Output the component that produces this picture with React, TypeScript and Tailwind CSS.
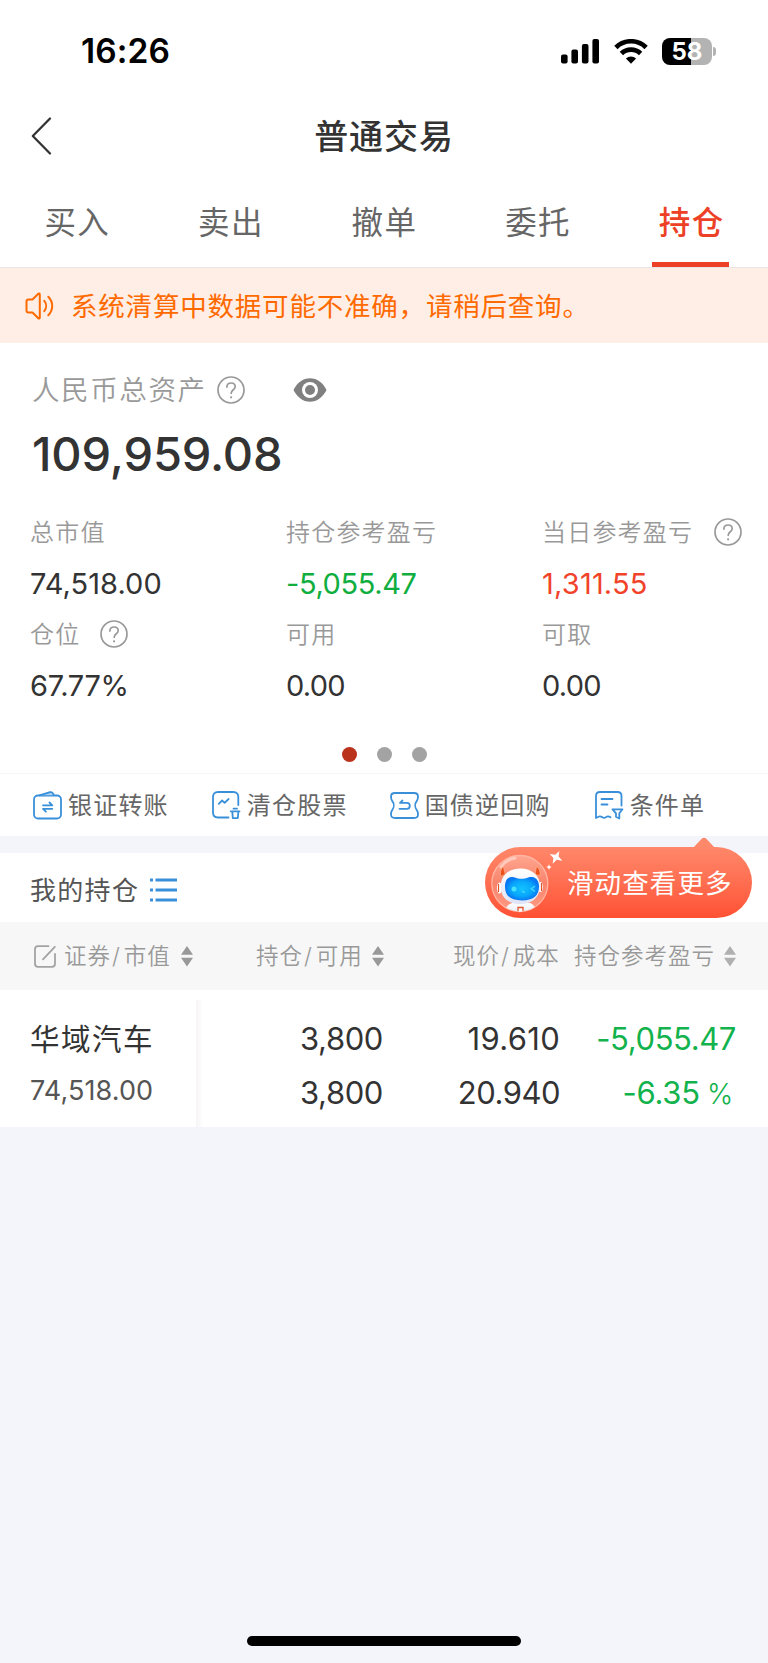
import React from 'react';

interface IconProps {
  className?: string;
}

interface Stat {
  label: string;
  value: string;
  valueClass: string;
  help?: string;
}

const tabs = ['买入', '卖出', '撤单', '委托', '持仓'];

const stats: Stat[] = [
  { label: '总市值', value: '74,518.00', valueClass: 'tracking-[0.05px] text-[#333]' },
  { label: '持仓参考盈亏', value: '-5,055.47', valueClass: 'tracking-[-0.4px] text-[#0fae3f]' },
  { label: '当日参考盈亏', value: '1,311.55', valueClass: 'tracking-[0.2px] text-[#f0432a]', help: 'ml-[21px]' },
  { label: '仓位', value: '67.77%', valueClass: 'tracking-[-0.3px] text-[#333]', help: 'ml-[20px]' },
  { label: '可用', value: '0.00', valueClass: 'tracking-[-0.7px] text-[#333]' },
  { label: '可取', value: '0.00', valueClass: 'tracking-[-0.7px] text-[#333]' },
];

const BackIcon: React.FC = () => (
  <svg width="22" height="40" viewBox="0 0 22 40" fill="none" stroke="#333" strokeWidth="2.3" strokeLinecap="round" strokeLinejoin="round">
    <path d="M20 2.5 2.8 20 20 37.5" />
  </svg>
);

const SignalIcon: React.FC = () => (
  <svg width="39" height="25" viewBox="0 0 39 25" fill="#000">
    <rect x="0" y="15.5" width="6.6" height="9" rx="2" />
    <rect x="10.4" y="10.5" width="6.6" height="14" rx="2" />
    <rect x="20.9" y="5" width="6.6" height="19.5" rx="2" />
    <rect x="31.4" y="0" width="6.6" height="24.5" rx="2" />
  </svg>
);

const WifiIcon: React.FC = () => (
  <svg width="34" height="25" viewBox="0 0 34 25" fill="none" stroke="#000" strokeWidth="4.7">
    <path d="M1.9 8.5a21.4 21.4 0 0 1 30.2 0" />
    <path d="M7.4 14.5a13.6 13.6 0 0 1 19.2 0" />
    <path d="M17 24.8 11.9 19.6a7.3 7.3 0 0 1 10.2 0z" fill="#000" stroke="none" />
  </svg>
);

const HelpIcon: React.FC<IconProps> = ({ className }) => (
  <svg className={className} width="28" height="28" viewBox="0 0 28 28" fill="none" stroke="#999" strokeWidth="1.7" strokeLinecap="round">
    <circle cx="14" cy="14" r="13" />
    <path d="M9.9 11.1c0-2.5 1.8-4.1 4.2-4.1s4.1 1.5 4.1 3.7c0 3-4 3.2-4 6.6" />
    <circle cx="14.1" cy="21.3" r="1.1" fill="#999" stroke="none" />
  </svg>
);

const EyeIcon: React.FC = () => (
  <svg width="34" height="24" viewBox="0 0 34 24">
    <path d="M.5 12C4 4.8 10 .3 17 .3S30 4.8 33.5 12C30 19.2 24 23.7 17 23.7S4 19.2.5 12z" fill="#808080" />
    <circle cx="17" cy="12" r="8" fill="#fff" />
    <circle cx="17" cy="12" r="5" fill="#808080" />
  </svg>
);

const SpeakerIcon: React.FC = () => (
  <svg width="29" height="28" viewBox="0 0 29 28" fill="none" stroke="#ff6a00" strokeWidth="2" strokeLinecap="round" strokeLinejoin="round">
    <path d="M7.500 7.500H3.500C2.200 7.500 1.500 8.300 1.500 9.500v9c0 1.200.7 2 2 2h4l5.800 5.700c.7.600 1.500.3 1.500-.6V2.400c0-.9-.8-1.200-1.500-.6z" />
    <path d="M19.300 8.800c2.400 3 2.400 7.400 0 10.400" />
    <path d="M23.300 4.800c5.200 5.300 5.200 13.100 0 18.400" />
  </svg>
);

const TransferIcon: React.FC = () => (
  <svg width="29" height="29" viewBox="0 0 29 29" fill="none" stroke="#3a8fd9" strokeWidth="1.8" strokeLinecap="round" strokeLinejoin="round">
    <rect x="1" y="4.500" width="27" height="23" rx="4" />
    <path d="M6.500 4.300 17 1.200c1.400-.4 2.300 0 2.900 1.200l1 1.900" fill="#a9d0f3" />
    <path d="M10 14.300h9.300L16.500 11.500M19.300 17.800H10l2.900 2.900" />
  </svg>
);

const ClearStockIcon: React.FC = () => (
  <svg width="29" height="29" viewBox="0 0 29 29" fill="none" stroke="#3a8fd9" strokeWidth="1.8" strokeLinecap="round" strokeLinejoin="round">
    <path d="M26.300 14V6c0-3.300-1.700-5-5-5H6C2.700 1 1 2.700 1 6v15.500c0 3.300 1.700 5 5 5h10.500" />
    <path d="m6.800 12.800 3.300-3.300 2.500 2.300 4-3.800" />
    <path d="M18.800 20.300h8.700M21.500 17.700h3.500M20.300 20.500l.5 6.700h5l.6-6.700" />
  </svg>
);

const RepoIcon: React.FC = () => (
  <svg width="29" height="27" viewBox="0 0 29 27" fill="none" stroke="#3a8fd9" strokeWidth="1.8" strokeLinecap="round" strokeLinejoin="round">
    <path d="M5 1h19c2.500 0 4 1.300 4 3.500 0 1.700-.2 3-1.200 4.400-2 2.600-2 6.600 0 9.200 1 1.400 1.200 2.700 1.200 4.400 0 2.200-1.500 3.500-4 3.500H5c-2.500 0-4-1.300-4-3.500 0-1.700.2-3 1.200-4.400 2-2.600 2-6.600 0-9.200C1.200 7.500 1 6.200 1 4.500 1 2.300 2.500 1 5 1z" />
    <path d="M12.500 8.500 10 10.800h7c2 0 2.800 1 2.800 3s-.8 3-2.800 3h-7.500" />
  </svg>
);

const ConditionIcon: React.FC = () => (
  <svg width="29" height="29" viewBox="0 0 29 29" fill="none" stroke="#3a8fd9" strokeWidth="1.8" strokeLinecap="round" strokeLinejoin="round">
    <path d="M26.500 14.500V5c0-2.700-1.300-4-4-4H5C2.300 1 1 2.300 1 5v22l2.500-1.300c1.500-.8 2.500-.3 3.800.6 1.500 1 2.500.9 3.700-.2 1.300-1.100 2.700-1.100 4.500.2" />
    <path d="M6.500 8h11M6.500 13.500h6" />
    <path d="M17.500 18.300h10l-3.200 4v5.200l-3.300-1.700v-3.500z" />
  </svg>
);

const ListIcon: React.FC = () => (
  <svg width="27" height="24" viewBox="0 0 27 24" fill="#3a8fd9">
    <path d="M0 .5h3v3H0zM5.500.5h21.500v3H5.500zM0 10.500h3v3H0zM5.500 10.500h21.500v3H5.500zM0 20.500h3v3H0zM5.500 20.500h21.500v3H5.500z" />
  </svg>
);

const EditIcon: React.FC = () => (
  <svg width="22" height="23" viewBox="0 0 22 23" fill="none" stroke="#a3a3a3" strokeWidth="1.8" strokeLinecap="round">
    <path d="M14.500 1.200H4C2 1.200 1 2.200 1 4.200v14.600c0 2 1 3 3 3h14c2 0 3-1 3-3V9" />
    <path d="M9 14.300 20.800 1.800" />
  </svg>
);

const SortIcon: React.FC<IconProps> = ({ className }) => (
  <svg className={className} width="12" height="21" viewBox="0 0 12 21" fill="currentColor">
    <path d="M6 0 12 8.800H0zM6 20.500 12 11.700H0z" />
  </svg>
);

const RobotIcon: React.FC = () => (
  <svg width="74" height="66" viewBox="0 0 74 66">
    <defs>
      <linearGradient id="globe" x1="0" y1="0" x2="0" y2="1">
        <stop offset="0" stopColor="#ffa690" />
        <stop offset=".5" stopColor="#f8836b" />
        <stop offset="1" stopColor="#ff9a84" />
      </linearGradient>
      <linearGradient id="shell" x1="0" y1="0" x2="0" y2="1">
        <stop offset="0" stopColor="#fff" />
        <stop offset="1" stopColor="#dfe3f4" />
      </linearGradient>
      <radialGradient id="visor">
        <stop offset="0" stopColor="#12c3ff" />
        <stop offset=".65" stopColor="#08a6fb" />
        <stop offset="1" stopColor="#0877f4" />
      </radialGradient>
      <clipPath id="globeClip">
        <circle cx="28.800" cy="33.500" r="28" />
      </clipPath>
    </defs>
    <circle cx="28.800" cy="33.500" r="28" fill="url(#globe)" stroke="#ffb5a3" strokeWidth="1.300" />
    <path d="M10 17C14 11.500 19 8.800 24 8" fill="none" stroke="#ffc9bb" strokeWidth="3" strokeLinecap="round" />
    <g clipPath="url(#globeClip)">
      <path d="M15 67v-8c1-4 4-6 9-6.500h13c4 .5 6 2.500 7 6.500v8z" fill="url(#shell)" />
      <path d="M27 57.500h5V66h-5z" fill="#fff" stroke="#e0552d" strokeWidth="1.300" />
      <ellipse cx="8.500" cy="38" rx="2.600" ry="5.500" fill="#fff" />
      <ellipse cx="49.500" cy="37" rx="2.300" ry="5" fill="#fff" />
      <path d="M7.500 34v8M50.500 33v8" stroke="#e0552d" strokeWidth="1.200" />
    </g>
    <path d="M9.800 26.500c-.9-4-.1-7.700 2.500-10l2 8z" fill="#ed4f1b" stroke="#ffb18a" strokeWidth=".7" />
    <path d="M49 25.500c.5-4-.8-7.300-3.500-9l-1.500 8z" fill="#ed4f1b" stroke="#ffb18a" strokeWidth=".7" />
    <path d="M9.700 36.500c0-10.500 7.500-18 19.600-18S49 26 49 36 42.500 54 29.500 54 9.700 47 9.700 36.500z" fill="url(#shell)" />
    <path d="M14 37c0-6 2-9.500 6-10 3.500-.3 5 1.700 10.500 1.700S37.500 26.500 41 27c4.500.6 7 4 7 9.500 0 9-6 14-17 14S14 46 14 37z" fill="url(#visor)" />
    <circle cx="23" cy="39" r="2.500" fill="#45e2ff" />
    <path d="m43.500 36.500-3.300 2.300 3.300 2.300M31.500 41.500l2 .8" fill="none" stroke="#45d4ff" strokeWidth="1.400" strokeLinecap="round" />
    <path d="M0-7.200 1.900-1.900 7.200 0 1.900 1.900 0 7.200-1.900 1.900-7.200 0-1.900-1.900z" fill="#fff" transform="translate(65 7.300) rotate(28)" />
    <path d="m58 14.300.8 2 2 .8-2 .8-.8 2-.8-2-2-.8 2-.8z" fill="#fff" />
  </svg>
);

const quickActions = [
  { label: '银证转账', icon: TransferIcon, spacing: 'ml-[33px]' },
  { label: '清仓股票', icon: ClearStockIcon, spacing: 'ml-[43px]' },
  { label: '国债逆回购', icon: RepoIcon, spacing: 'ml-[42px]' },
  { label: '条件单', icon: ConditionIcon, spacing: 'ml-[44px]' },
];

const StatusBar: React.FC = () => (
  <header className="flex h-[102px] items-center pl-[81px] pr-[52px]">
    <span className="pt-px text-[33.5px] font-semibold leading-none tracking-[0.1px] text-black">16:26</span>
    <div className="ml-auto flex items-center">
      <SignalIcon />
      <div className="ml-[14px] flex">
        <WifiIcon />
      </div>
      <div className="ml-[14px] flex h-[27px] w-[50px] items-center justify-center rounded-[8px] bg-[linear-gradient(90deg,#000_58%,#b3b3b3_58%)]">
        <span className="pt-px text-[24px] font-bold leading-none text-white">58</span>
      </div>
      <div className="ml-px h-[9px] w-[3px] rounded-r-full bg-[#b3b3b3]" />
    </div>
  </header>
);

const TitleBar: React.FC = () => (
  <div className="grid h-[68px] grid-cols-[1fr_auto_1fr] items-center pl-[30px] pr-[30px]">
    <BackIcon />
    <h1 className="pt-[2px] text-[34px] font-medium leading-none tracking-[0.9px] text-[#333]">普通交易</h1>
  </div>
);

const TabBar: React.FC = () => (
  <nav className="grid h-[98px] grid-cols-5 border-b border-[#ebe6e6]">
    {tabs.map((tab) => {
      const active = tab === '持仓';
      return (
        <div key={tab} className="flex flex-col items-center justify-between pt-[37px]">
          <span
            className={`pl-px text-[31.5px] leading-none tracking-[1.4px] ${
              active ? 'font-medium text-[#ec4126]' : 'text-[#666]'
            }`}
          >
            {tab}
          </span>
          {active && <span className="mr-px h-[5px] w-[77px] bg-[#ec4126]" />}
        </div>
      );
    })}
  </nav>
);

const AssetPanel: React.FC = () => (
  <section className="h-[430px] pt-[33px]">
    <div className="flex h-[28px] items-center pl-[32px]">
      <span className="pt-[2px] text-[27.5px] font-[350] leading-none tracking-[1.6px] text-[#999]">人民币总资产</span>
      <HelpIcon className="ml-[10px]" />
      <div className="ml-[48px]">
        <EyeIcon />
      </div>
    </div>
    <p className="mt-[26px] pl-[32px] text-[47px] font-medium leading-none tracking-[-0.15px] text-[#333]">109,959.08</p>
    <div className="mt-[41px] grid grid-cols-[256px_256px_256px] pl-[30px]">
      {stats.map((stat) => (
        <div key={stat.label} className="h-[102px]">
          <div className="flex h-[28px] items-center">
            <span className="whitespace-nowrap pt-[2px] text-[24px] font-[350] leading-none tracking-[1.2px] text-[#999]">
              {stat.label}
            </span>
            {stat.help && <HelpIcon className={stat.help} />}
          </div>
          <p className={`mt-[23px] text-[29px] leading-none ${stat.valueClass}`}>{stat.value}</p>
        </div>
      ))}
    </div>
    <div className="mt-[25px] flex justify-center gap-[20px] pl-px">
      <span className="size-[15px] rounded-full bg-[#ba321c]" />
      <span className="size-[15px] rounded-full bg-[#a3a3a3]" />
      <span className="size-[15px] rounded-full bg-[#a3a3a3]" />
    </div>
  </section>
);

const QuickActions: React.FC = () => (
  <div className="flex h-[63px] items-center border-t border-[#f7f7f7]">
    {quickActions.map(({ label, icon: Icon, spacing }) => (
      <div key={label} className={`flex items-center gap-[6px] ${spacing}`}>
        <Icon />
        <span className="whitespace-nowrap pt-[2px] text-[24px] leading-none tracking-[1.2px] text-[#666]">{label}</span>
      </div>
    ))}
  </div>
);

const SwipeHint: React.FC = () => (
  <div className="absolute right-[16px] top-[-6px] flex h-[71px] w-[267px] items-center rounded-full bg-linear-to-b from-[#ff876a] to-[#ff5033] pl-[6px]">
    <svg className="absolute right-[37px] top-[-10px]" width="22" height="11" viewBox="0 0 22 11">
      <path d="M0 11 9.200 1.300Q11 0 12.800 1.300L22 11z" fill="#ff876a" />
    </svg>
    <RobotIcon />
    <span className="ml-[2px] pt-[2px] text-[26.5px] leading-none tracking-[1.1px] text-white">滑动查看更多</span>
  </div>
);

const Slash: React.FC = () => <span className="ml-[1px] mr-[3px]">/</span>;

const Holdings: React.FC = () => (
  <section className="relative bg-white">
    <div className="flex h-[69px] items-center pl-[30px] pt-[6px]">
      <h2 className="text-[26px] leading-none tracking-[1.3px] text-[#555]">我的持仓</h2>
      <div className="ml-[11px] pb-[2px]">
        <ListIcon />
      </div>
    </div>
    <SwipeHint />
    <div className="flex h-[68px] items-center bg-[#f7f7f7] pl-[34px] text-[22.5px] font-[350] leading-none tracking-[1px] text-[#999]">
      <EditIcon />
      <span className="ml-[8px] w-[108px] whitespace-nowrap">证券<Slash />市值</span>
      <SortIcon className="ml-[9px]" />
      <span className="ml-[63px] w-[108px] whitespace-nowrap">持仓<Slash />可用</span>
      <SortIcon className="ml-[8px]" />
      <span className="ml-[69px] w-[108px] whitespace-nowrap">现价<Slash />成本</span>
      <span className="ml-[13px] w-[142px] whitespace-nowrap">持仓参考盈亏</span>
      <SortIcon className="ml-[8px] text-[#b0b0b0]" />
    </div>
    <div className="flex h-[137px] text-[31px] leading-none tracking-[-0.4px] text-[#333]">
      <div className="flex w-[196px] flex-col pl-[30px] pt-[35px]">
        <span className="text-[29.5px] tracking-[1.5px]">华域汽车</span>
        <span className="mt-[22px] text-[27px] tracking-[0.1px] text-[#555]">74,518.00</span>
      </div>
      <div className="mt-[10px] w-[7px] bg-linear-to-r from-[#f7f4f5] to-white" />
      <div className="flex w-[180px] flex-col items-end gap-[23px] pt-[33px]">
        <span>3,800</span>
        <span>3,800</span>
      </div>
      <div className="flex w-[177px] flex-col items-end gap-[23px] pt-[33px]">
        <span className="tracking-[0.3px]">19.610</span>
        <span className="tracking-[-0.5px]">20.940</span>
      </div>
      <div className="flex w-[176px] flex-col items-end gap-[23px] pt-[33px] text-[#12b24c]">
        <span>-5,055.47</span>
        <span className="mr-[3px] tracking-[-0.2px]">
          -6.35<span className="ml-[7px] text-[28px] font-[350]">%</span>
        </span>
      </div>
    </div>
  </section>
);

export default function App() {
  return (
    <div className="flex h-[1663px] w-[768px] flex-col overflow-hidden bg-[#f4f5fa] font-['Inter','Noto_Sans_CJK_SC',sans-serif]">
      <div className="bg-white">
        <StatusBar />
        <TitleBar />
        <TabBar />
        <div className="flex h-[75px] items-center bg-[#ffeee5] pl-[25px]">
          <SpeakerIcon />
          <span className="ml-[17px] pt-px text-[26.5px] leading-none tracking-[0.8px] text-[#ff6a00]">
            系统清算中数据可能不准确，请稍后查询。
          </span>
        </div>
        <AssetPanel />
        <QuickActions />
      </div>
      <div className="mt-[17px]">
        <Holdings />
      </div>
      <div className="mx-auto mb-[17px] mt-auto h-[10px] w-[274px] rounded-full bg-black" />
    </div>
  );
}
